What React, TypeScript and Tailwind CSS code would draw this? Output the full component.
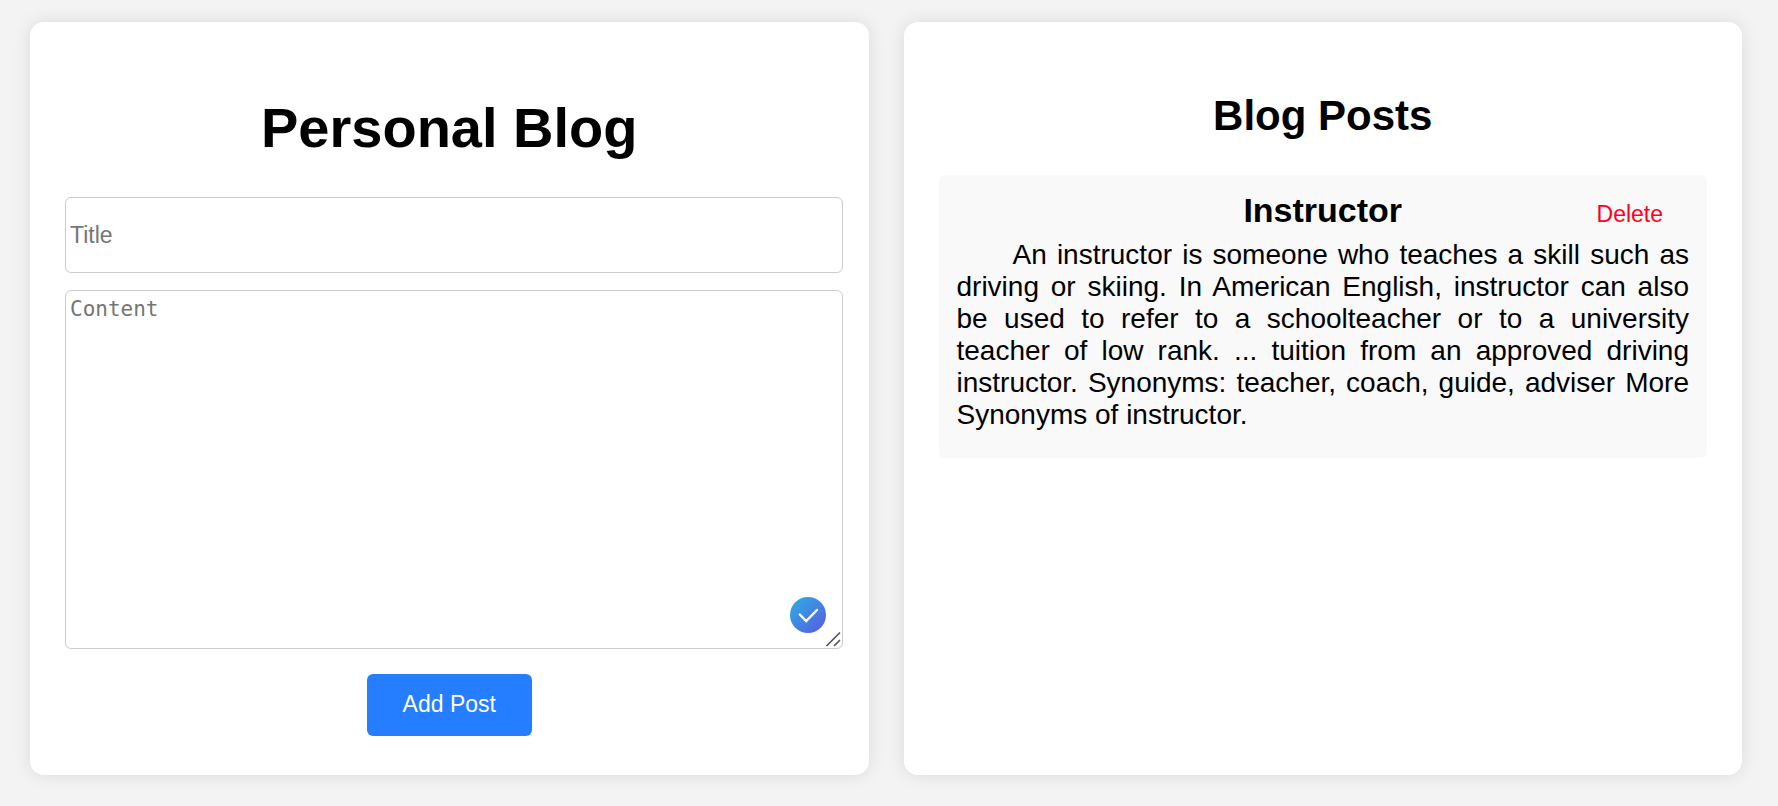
import { useState } from "react";
import type { FormEvent } from "react";

type Post = { id: number; title: string; content: string };

const initialPosts: Post[] = [
  {
    id: 1,
    title: "Instructor",
    content:
      "An instructor is someone who teaches a skill such as driving or skiing. In American English, instructor can also be used to refer to a schoolteacher or to a university teacher of low rank. ... tuition from an approved driving instructor. Synonyms: teacher, coach, guide, adviser More Synonyms of instructor.",
  },
];

const cardClass =
  "min-w-0 flex-1 rounded-[14px] bg-white px-[35px] shadow-[0_0_18px_rgba(0,0,0,0.1)]";

const fieldClass =
  "block w-full rounded-md border border-[#cccccc] bg-white px-1 outline-none placeholder:text-[#757575]";

function CheckBadge() {
  return (
    <svg className="absolute right-[17px] bottom-4 size-9" viewBox="0 0 36 36" aria-hidden="true">
      <defs>
        <linearGradient id="badge" x1="0" y1="0" x2="1" y2="1">
          <stop offset="0.1" stopColor="#2fa8e4" />
          <stop offset="0.9" stopColor="#5661e0" />
        </linearGradient>
      </defs>
      <circle cx="18" cy="18" r="18" fill="url(#badge)" />
      <path
        d="M9.8 17.5 L16.2 24 L27 13"
        fill="none"
        stroke="#ffffff"
        strokeWidth="2.4"
        strokeLinecap="round"
      />
    </svg>
  );
}

function ResizeGrip() {
  return (
    <svg
      className="pointer-events-none absolute right-0.5 bottom-0.5 size-4"
      viewBox="0 0 16 16"
      aria-hidden="true"
    >
      <path d="M1.5 15 L15 1.5 M9 15 L15 9" fill="none" stroke="#555555" strokeWidth="1.7" />
    </svg>
  );
}

function PostForm({ onAdd }: { onAdd: (title: string, content: string) => void }) {
  const [title, setTitle] = useState("");
  const [content, setContent] = useState("");

  const submit = (event: FormEvent) => {
    event.preventDefault();
    if (!title.trim() || !content.trim()) return;
    onAdd(title, content);
    setTitle("");
    setContent("");
  };

  return (
    <form className="mt-[37px] flex flex-col items-center" onSubmit={submit}>
      <div className="flex w-full flex-col gap-[17px]">
        <div className="-mr-[9px]">
          <input
            type="text"
            aria-label="Title"
            placeholder="Title"
            className={`${fieldClass} h-[76px] text-[23px]`}
            value={title}
            onChange={(e) => setTitle(e.target.value)}
          />
        </div>
        <div className="relative -mr-[9px]">
          <textarea
            aria-label="Content"
            placeholder="Content"
            className={`${fieldClass} h-[359px] resize-none py-1 font-['DejaVu_Sans_Mono',monospace] text-[21px] leading-7`}
            value={content}
            onChange={(e) => setContent(e.target.value)}
          />
          <CheckBadge />
          <ResizeGrip />
        </div>
      </div>
      <button
        type="submit"
        className="mt-[25px] h-[62px] cursor-pointer rounded-md bg-[#257dff] px-9 pb-0.5 text-[23px] text-white"
      >
        Add Post
      </button>
    </form>
  );
}

function PostItem({ post, onDelete }: { post: Post; onDelete: () => void }) {
  return (
    <article className="rounded-md bg-[#f9f9f9] px-[18px] pt-[15px] pb-[27px]">
      <div className="grid grid-cols-[1fr_auto_1fr] items-baseline">
        <h3 className="col-start-2 text-[34px] leading-10 font-bold">{post.title}</h3>
        <button
          type="button"
          className="mr-[26px] cursor-pointer justify-self-end text-[23px] leading-7 text-[#ff0019]"
          onClick={onDelete}
        >
          Delete
        </button>
      </div>
      <p className="mt-[9px] indent-14 text-[28px] leading-8 text-justify">{post.content}</p>
    </article>
  );
}

export default function App() {
  const [posts, setPosts] = useState(initialPosts);

  return (
    <main className="flex min-h-screen items-start bg-[#f3f3f3] pt-[22px] pr-9 pb-[31px] pl-[30px] font-['Liberation_Sans',Arial,sans-serif] text-black">
      <div className="flex w-full gap-[35px]">
        <section className={`${cardClass} pt-[74px] pb-[39px]`}>
          <h1 className="text-center text-[56px] leading-[64px] font-bold">Personal Blog</h1>
          <PostForm
            onAdd={(title, content) => setPosts([...posts, { id: Date.now(), title, content }])}
          />
        </section>
        <section className={`${cardClass} pt-[70px] pb-[39px]`}>
          <h2 className="text-center text-[42px] leading-[48px] font-bold">Blog Posts</h2>
          <div className="mt-[35px] flex flex-col gap-[17px]">
            {posts.map((post) => (
              <PostItem
                key={post.id}
                post={post}
                onDelete={() => setPosts(posts.filter((p) => p.id !== post.id))}
              />
            ))}
          </div>
        </section>
      </div>
    </main>
  );
}
